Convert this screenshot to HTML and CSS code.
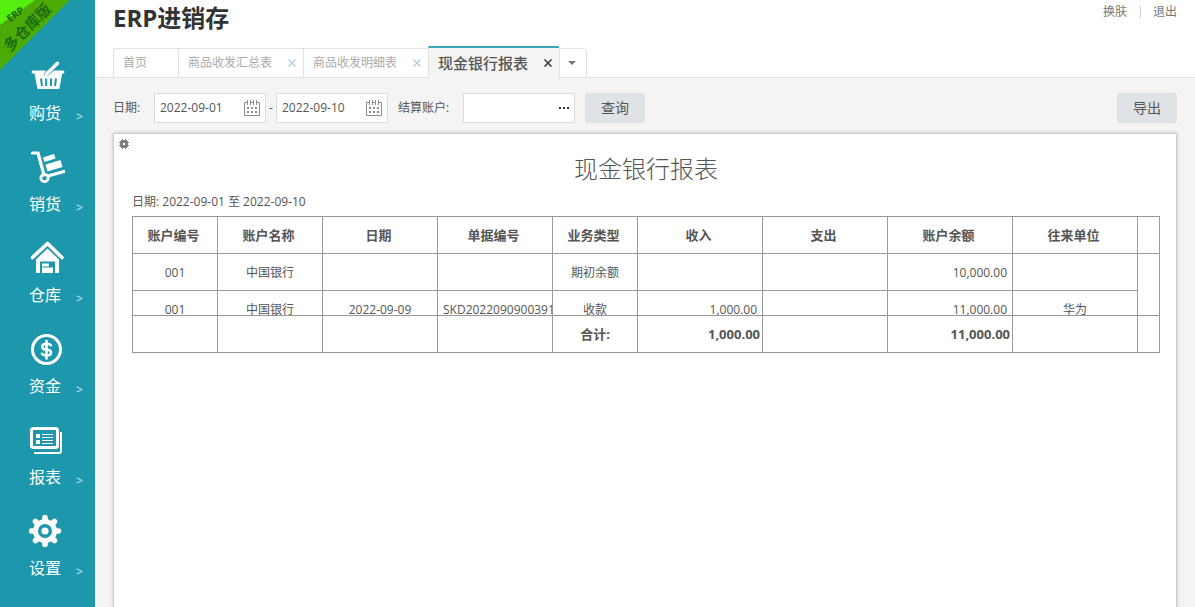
FILE: index.html
```html
<!DOCTYPE html>
<html lang="zh-CN">
<head>
<meta charset="utf-8">
<meta name="viewport" content="width=device-width, initial-scale=1">
<title>ERP进销存</title>
<link rel="stylesheet" href="styles.css">
</head>
<body>
<div class="app">
  <aside class="sidebar">
    <svg class="ribbon" viewBox="0 0 72 72" aria-label="ERP 多仓库版" role="img">
      <path fill="#4caa07" d="M0 0H70L0 70Z"/>
      <path fill="#55f010" d="M0 0H35L0 25Z"/>
      <text class="ribbon-small" transform="translate(15 14) rotate(-35)" y="4">ERP</text>
      <text class="ribbon-large" transform="translate(27 27) rotate(-45)" y="6">多仓库版</text>
    </svg>
    <nav class="menu">
      <a class="menu-item" href="#">
        <svg class="menu-icon" viewBox="0 0 36 36" fill="#fff">
          <path d="M4 13.500H17L14.500 17.500Q16 20 19 18.500L25 13.500H34Q35.500 13.500 35.500 15T34 16.500H33.200L30.500 31Q30.300 32 29.500 32H9.500Q8.500 32 8.300 31L5.500 16.500H4Q2.500 16.500 2.500 15T4 13.500Z"/>
          <path d="M17 17.500L28.500 6.200" stroke="#fff" stroke-width="3.400" stroke-linecap="round"/>
          <path d="M12 21.500L13 29M17.200 21.500V29M22 21.500V29M27 21.500L26 29" stroke="#1c97ab" stroke-width="2"/>
        </svg>
        <span class="menu-label">购货</span><span class="menu-arrow">&gt;</span>
      </a>
      <a class="menu-item" href="#">
        <svg class="menu-icon" viewBox="0 0 36 36" fill="#fff">
          <path d="M3.500 5H9L15 27" fill="none" stroke="#fff" stroke-width="3.200" stroke-linecap="round" stroke-linejoin="round"/>
          <circle cx="15.500" cy="30" r="3.700" fill="none" stroke="#fff" stroke-width="2.800"/>
          <path d="M19 28L35 23.500" stroke="#fff" stroke-width="3.200" stroke-linecap="round"/>
          <path d="M14 9.500L25 6L26.500 10.500L15.500 14ZM16.500 16.500L31.500 12L33.500 19L18.500 23.500Z"/>
        </svg>
        <span class="menu-label">销货</span><span class="menu-arrow">&gt;</span>
      </a>
      <a class="menu-item" href="#">
        <svg class="menu-icon" viewBox="0 0 36 36" fill="#fff">
          <path d="M3.500 18.500L18.500 4.500L33 18.500" fill="none" stroke="#fff" stroke-width="3.600" stroke-linecap="round" stroke-linejoin="round"/>
          <path d="M18.500 9.500L30 20.500V34H7V20.500Z"/>
          <path fill="#1c97ab" d="M11 22.500H26V34H24V28.500H13V34H11Z"/>
          <path d="M13 24.500H20V27.500H13ZM13 29H24V34H13Z"/>
        </svg>
        <span class="menu-label">仓库</span><span class="menu-arrow">&gt;</span>
      </a>
      <a class="menu-item" href="#">
        <svg class="menu-icon" viewBox="0 0 36 36" fill="none" stroke="#fff">
          <circle cx="17.500" cy="19.500" r="14" stroke-width="3"/>
          <path stroke-width="2.600" stroke-linecap="round" d="M21.800 15.200Q20.500 13.800 17.700 13.800Q13.300 13.800 13.300 16.700T17.700 19.700T21.900 22.800T17.500 25.500Q14.500 25.500 13 23.800M17.500 11V28.500"/>
        </svg>
        <span class="menu-label">资金</span><span class="menu-arrow">&gt;</span>
      </a>
      <a class="menu-item" href="#">
        <svg class="menu-icon" viewBox="0 0 36 36" fill="none" stroke="#fff">
          <rect x="2.500" y="7.500" width="26" height="19" rx="2" stroke-width="3"/>
          <path stroke-width="2" d="M32 11V30Q32 32 30 32H5"/>
          <path stroke-width="1" d="M13 13.500H24M13 16.500H24M13 19.500H24M13 22.500H24"/>
          <path fill="#fff" stroke="none" d="M7 13H11V17H7ZM7 19H11V23H7Z"/>
        </svg>
        <span class="menu-label">报表</span><span class="menu-arrow">&gt;</span>
      </a>
      <a class="menu-item" href="#">
        <svg class="menu-icon" viewBox="0 0 36 36" fill="none" stroke="#fff">
          <path stroke-width="5.600" stroke-linecap="round" d="M16 5.500V32.500M2.500 19H29.500M6.500 9.500L25.500 28.500M25.500 9.500L6.500 28.500"/>
          <circle cx="16" cy="19" r="9.500" fill="#1c97ab" stroke-width="5"/>
          <circle cx="16" cy="19" r="3.600" fill="#fff" stroke="none"/>
        </svg>
        <span class="menu-label">设置</span><span class="menu-arrow">&gt;</span>
      </a>
    </nav>
  </aside>

  <div class="main">
    <header class="header">
      <h1 class="brand">ERP进销存</h1>
      <div class="links"><a class="link" href="#">换肤</a><a class="link" href="#">退出</a></div>
    </header>

    <div class="tabs">
      <button class="tab tab-home" type="button">首页</button>
      <div class="tab"><span>商品收发汇总表</span><button class="close" type="button" aria-label="关闭"><svg viewBox="0 0 8 8"><path d="M0.500 0.500L7.500 7.500M7.500 0.500L0.500 7.500"/></svg></button></div>
      <div class="tab"><span>商品收发明细表</span><button class="close" type="button" aria-label="关闭"><svg viewBox="0 0 8 8"><path d="M0.500 0.500L7.500 7.500M7.500 0.500L0.500 7.500"/></svg></button></div>
      <div class="tab tab-active"><span>现金银行报表</span><button class="close" type="button" aria-label="关闭"><svg viewBox="0 0 8 8"><path d="M0.500 0.500L7.500 7.500M7.500 0.500L0.500 7.500"/></svg></button></div>
      <button class="tab tab-more" type="button" aria-label="更多"><svg viewBox="0 0 8 4"><path fill="#777" d="M0 0H8L4 4Z"/></svg></button>
    </div>

    <main class="content">
      <form class="toolbar">
        <label class="caption" for="from">日期:</label>
        <div class="field">
          <input class="input" id="from" type="text" value="2022-09-01">
          <svg class="calendar" viewBox="0 0 16 16"><path fill="none" stroke="#8c8c8c" d="M3.500 2.500H0.500V15.500H15.500V2.500H12.500M3.500 0V5M6.500 0V5M9.500 0V5M12.500 0V5M6.500 2.500H9.500"/><path fill="#8c8c8c" d="M3 7h2v2H3zM7 7h2v2H7zM11 7h2v2h-2zM3 11h2v2H3zM7 11h2v2H7zM11 11h2v2h-2z"/></svg>
        </div>
        <span class="dash">-</span>
        <div class="field">
          <input class="input" id="to" type="text" value="2022-09-10" aria-label="结束日期">
          <svg class="calendar" viewBox="0 0 16 16"><path fill="none" stroke="#8c8c8c" d="M3.500 2.500H0.500V15.500H15.500V2.500H12.500M3.500 0V5M6.500 0V5M9.500 0V5M12.500 0V5M6.500 2.500H9.500"/><path fill="#8c8c8c" d="M3 7h2v2H3zM7 7h2v2H7zM11 7h2v2h-2zM3 11h2v2H3zM7 11h2v2H7zM11 11h2v2h-2z"/></svg>
        </div>
        <label class="caption caption-account" for="account">结算账户:</label>
        <div class="field">
          <input class="input" id="account" type="text">
          <button class="pick" type="button" aria-label="选择账户"><svg viewBox="0 0 10 2"><path fill="#333" d="M0 0h2v2H0zM4 0h2v2H4zM8 0h2v2H8z"/></svg></button>
        </div>
        <button class="button" type="button">查询</button>
        <button class="button button-export" type="button">导出</button>
      </form>

      <section class="panel">
        <button class="settings" type="button" aria-label="列设置"><svg viewBox="0 0 10 10"><path fill="#808080" fill-rule="evenodd" d="M2 1h1V0h1v1h2V0h1v1h1v1h1v1h1v1H9v2h1v1H9v1H8v1H7v1H6V9H4v1H3V9H2V8H1V7H0V6h1V4H0V3h1V2h1zM4 4v2h2V4z"/></svg></button>
        <h2 class="title">现金银行报表</h2>
        <p class="range">日期: 2022-09-01 至 2022-09-10</p>
        <table class="report">
          <colgroup><col class="w85"><col class="w105"><col class="w115"><col class="w115"><col class="w85"><col class="w125"><col class="w125"><col class="w125"><col class="w125"><col></colgroup>
          <thead>
            <tr><th>账户编号</th><th>账户名称</th><th>日期</th><th>单据编号</th><th>业务类型</th><th>收入</th><th>支出</th><th>账户余额</th><th>往来单位</th><th></th></tr>
          </thead>
          <tbody>
            <tr><td>001</td><td>中国银行</td><td></td><td></td><td>期初余额</td><td></td><td></td><td class="num">10,000.00</td><td></td><td rowspan="2"></td></tr>
            <tr class="cut"><td><div class="clip">001</div></td><td><div class="clip">中国银行</div></td><td><div class="clip">2022-09-09</div></td><td class="code"><div class="clip">SKD20220909003911</div></td><td><div class="clip">收款</div></td><td class="num"><div class="clip">1,000.00</div></td><td></td><td class="num"><div class="clip">11,000.00</div></td><td><div class="clip">华为</div></td></tr>
          </tbody>
          <tfoot>
            <tr><td></td><td></td><td></td><td></td><td>合计:</td><td class="num">1,000.00</td><td></td><td class="num">11,000.00</td><td></td><td></td></tr>
          </tfoot>
        </table>
      </section>
    </main>
  </div>
</div>
</body>
</html>
```
FILE: styles.css
```css
* { box-sizing: border-box; }

body {
  margin: 0;
  color: #555;
  font: 12px/18px "Open Sans", "Noto Sans CJK SC", sans-serif;
  background: #f4f4f4;
}

a { color: inherit; text-decoration: none; }

button {
  padding: 0;
  border: 0;
  color: inherit;
  font: inherit;
  background: none;
}

svg { display: block; }

.app { display: flex; height: 100vh; overflow: hidden; }

.sidebar {
  position: relative;
  flex: 0 0 95px;
  padding-top: 52px;
  color: #fff;
  background: #1c97ab;
}

.ribbon { position: absolute; top: 0; left: 0; width: 72px; height: 72px; overflow: visible; }
.ribbon text { fill: #1d6b12; font-weight: 700; text-anchor: middle; }
.ribbon-small { font-size: 10px; }
.ribbon-large { font-size: 15px; }

.menu-item {
  display: grid;
  grid-template-columns: 62px 1fr;
  row-gap: 8px;
  height: 91px;
  padding: 5px 0 18px 14px;
}
.menu-icon { grid-column: 1 / 3; width: 36px; height: 36px; margin-left: 15px; }
.menu-label { font-size: 16px; line-height: 24px; text-align: center; }
.menu-arrow { padding-top: 7px; opacity: 0.8; }

.main { display: flex; flex: 1; flex-direction: column; min-width: 0; }

.header {
  display: flex;
  justify-content: space-between;
  height: 46px;
  padding: 2px 18px 0;
  background: #fff;
}
.brand { margin: 0; color: #333; font-size: 24px; line-height: 32px; }
.links { display: flex; color: #777; }
.link { height: 12px; line-height: 20px; }
.link + .link { position: relative; margin-left: 26px; }
.link + .link::before {
  position: absolute;
  top: 4px;
  left: -13px;
  width: 1px;
  height: 12px;
  background: #ccc;
  content: "";
}

.tabs {
  display: flex;
  align-items: flex-end;
  height: 32px;
  padding-left: 18px;
  color: #aaa;
  background: linear-gradient(#e2e2e2, #e2e2e2) bottom / 100% 1px no-repeat #fff;
}
.tab {
  display: flex;
  align-items: center;
  justify-content: space-between;
  width: 125px;
  height: 30px;
  padding: 0 7px 0 9px;
  border: 1px solid #e2e2e2;
  border-right: 0;
}
.tab-home { width: 65px; border-top-left-radius: 3px; }
.tab-active {
  width: 131px;
  height: 32px;
  border-top: 2px solid #3aa6bb;
  border-bottom: 0;
  color: #555;
  font-size: 15px;
  font-weight: 500;
  background: #f4f4f4;
}
.tab-more {
  justify-content: center;
  width: 28px;
  padding: 0 2px 0 0;
  border-right: 1px solid #e2e2e2;
  border-top-right-radius: 3px;
}
.tab-more svg { width: 8px; height: 4px; }
.close svg { width: 8px; height: 8px; fill: none; stroke: #b0d0e4; stroke-width: 1.5px; }
.tab-active .close svg { stroke: #333; }

.content { display: flex; flex: 1; flex-direction: column; padding: 15px 18px 0; }

.toolbar { display: flex; align-items: center; height: 30px; margin-bottom: 10px; }
.caption { width: 41px; }
.caption-account { width: 65px; margin-left: 10px; }
.field {
  display: flex;
  align-items: center;
  width: 112px;
  height: 30px;
  padding: 0 5px;
  border: 1px solid #d6dce1;
  background: #fff;
}
.input {
  flex: 1;
  min-width: 0;
  padding: 0;
  border: 0;
  outline: 0;
  color: #555;
  font: inherit;
  background: none;
}
.calendar { width: 16px; height: 16px; }
.pick svg { width: 10px; height: 2px; }
.dash { width: 10px; text-align: center; }
.button {
  width: 60px;
  height: 30px;
  margin-left: 10px;
  border-radius: 2px;
  font-size: 14px;
  background: #dfe3e6;
}
.button-export { margin-left: auto; }

.panel {
  flex: 1;
  padding: 5px 16px 0 18px;
  border: 1px solid #ccc;
  border-bottom: 0;
  background: #fff;
  box-shadow: 0 0 4px rgba(0, 0, 0, 0.2);
}
.settings { display: block; margin-left: -13px; }
.settings svg { width: 10px; height: 10px; }
.title { margin: 4px 0 8px; font-size: 24px; font-weight: 300; line-height: 32px; text-align: center; }
.range { margin: 0 0 5px; }

.report { width: 100%; table-layout: fixed; border-collapse: collapse; }
.report tr { height: 37px; }
.report .cut { height: 25px; }
.report th, .report td { padding: 0 5px; border: 1px solid #999; text-align: center; }
.report th { padding-right: 8px; font-size: 13px; }
.report tbody td { padding-top: 2px; }
.report .cut td { padding-top: 0; }
.report .num { text-align: right; }
.report .cut .code { padding-right: 0; text-align: left; }
.report tfoot td { padding: 0 2px; font-size: 13px; font-weight: 700; }
.clip { height: 24px; padding-top: 10px; overflow: hidden; white-space: nowrap; }
.w85 { width: 85px; }
.w105 { width: 105px; }
.w115 { width: 115px; }
.w125 { width: 125px; }
```
